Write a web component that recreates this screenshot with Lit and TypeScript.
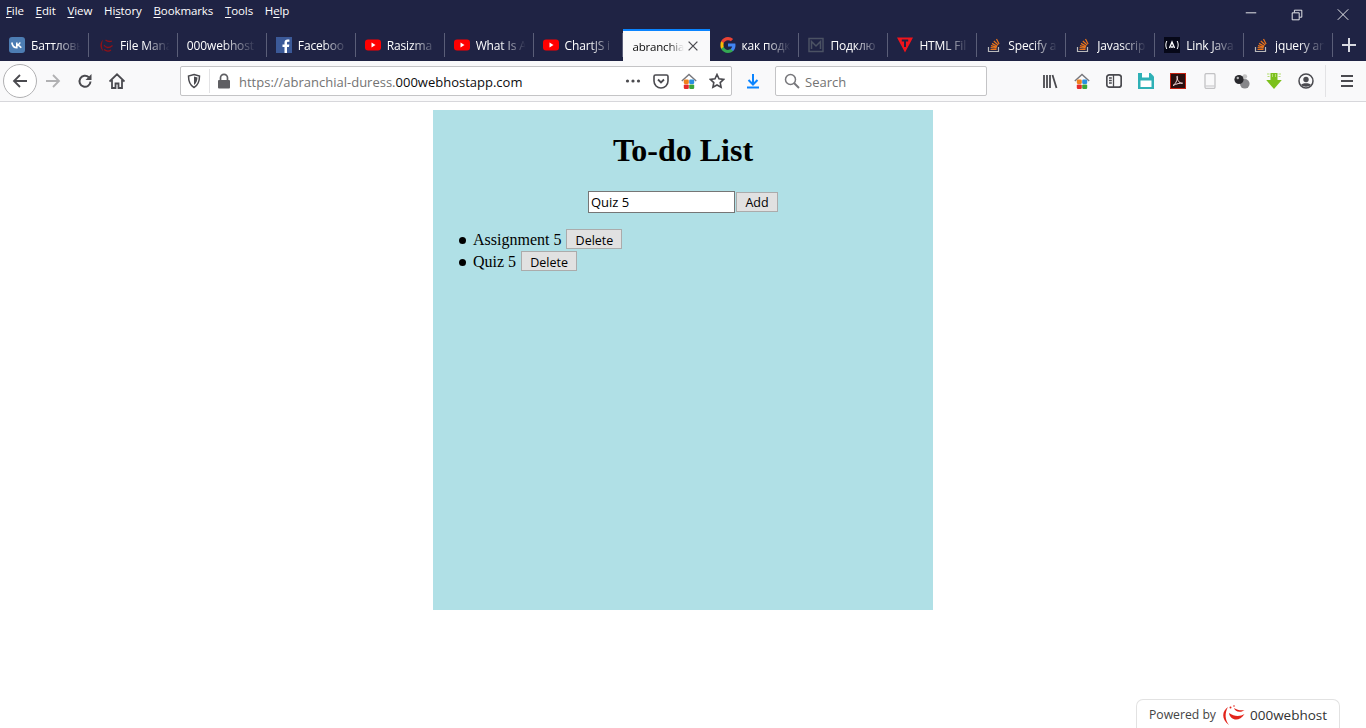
import { LitElement, html, css, svg } from 'lit';
import { customElement, state } from 'lit/decorators.js';

const ytIcon = svg`<rect x="0" y="2.5" width="16" height="11" rx="3" fill="#f00"/><path d="M6.5 5.5v5l4-2.5z" fill="#fff"/>`;
const soIcon = svg`<path d="M2.5 10v4.5h10V10" fill="none" stroke="#b9b9bb" stroke-width="1.2"/><path d="M4.5 12.5h6M4.6 10.6l6 .6M5 8.6l5.800 1.600M6 6.400l5.300 2.800M7.800 4l4.400 4M10.500 2l2.600 5" fill="none" stroke="#e8731c" stroke-width="1.2"/>`;
const homeColor = svg`<path d="M.8 8L8 1.500 15.200 8" fill="none" stroke="#77777c" stroke-width="1.400"/><rect x="2.800" y="6.500" width="5" height="4.500" rx="1.200" fill="#f0801c"/><rect x="8.200" y="6.500" width="5" height="4.500" rx="1.200" fill="#2a8fe0"/><rect x="2.800" y="11.400" width="5" height="4.600" rx="1.200" fill="#e52b2b"/><rect x="8.200" y="11.400" width="5" height="4.600" rx="1.200" fill="#3aa53a"/>`;

const favicons: Record<string, unknown> = {
  vk: svg`<rect width="16" height="16" rx="3" fill="#4d7db3"/><path d="M2.800 5.500c.6 3.400 2.200 5.200 5 5.200V5.500M8 8c1.600-.2 2.600-1.200 3.200-2.500M8.200 8c1.800.2 3 1.200 4 2.700" fill="none" stroke="#fff" stroke-width="1.600"/>`,
  swirl: svg`<path d="M5 2.500C1.500 6 1.500 11 5.500 14.500 3.500 10.500 3.500 7 5 2.500z" fill="#8e1118"/><path d="M6 8c1.500 3 5 3.500 8.500.5M7.500 3c2 1.500 4 2 6.500 1M6 12.500c2.500 2 5 2 7 .5" fill="none" stroke="#8e1118" stroke-width="1.300"/>`,
  fb: svg`<rect width="16" height="16" fill="#3b5998"/><path d="M11 16v-6h2l.3-2.500H11V6c0-.8.300-1.200 1.200-1.200h1.200V2.600C13 2.500 12.300 2.400 11.500 2.400 9.700 2.400 8.500 3.500 8.500 5.600v1.900h-2V10h2v6z" fill="#fff"/>`,
  yt: ytIcon,
  google: svg`<path d="M15.500 8.200c0-.6-.1-1.100-.2-1.600H8v3h4.200c-.2 1-.7 1.800-1.600 2.400v2h2.500c1.500-1.400 2.400-3.400 2.400-5.800z" fill="#4285f4"/><path d="M8 16c2.100 0 3.900-.7 5.100-1.900l-2.500-2c-.7.500-1.600.8-2.600.8-2 0-3.700-1.400-4.300-3.200H1.100v2C2.400 14.300 5 16 8 16z" fill="#34a853"/><path d="M3.700 9.700C3.400 8.800 3.400 7.200 3.700 6.300v-2H1.100C.2 6 .2 10 1.100 11.700z" fill="#fbbc05"/><path d="M8 3.200c1.100 0 2.100.4 2.900 1.100l2.200-2.200C11.800.8 10 0 8 0 5 0 2.400 1.700 1.100 4.300l2.600 2C4.300 4.500 6 3.200 8 3.200z" fill="#ea4335"/>`,
  mail: svg`<rect x="1" y="1.500" width="14" height="13" fill="none" stroke="#4b5263" stroke-width="1.500"/><path d="M3.500 12V4.500L8 9l4.500-4.500V12" fill="none" stroke="#4b5263" stroke-width="1.500"/>`,
  tri: svg`<path d="M0 .5h16L8 15.500z" fill="#f0141c"/><path d="M4.800 3.500h6.400M8 3.500v6.500" stroke="#1f2344" stroke-width="2"/>`,
  so: soIcon,
  link: svg`<rect width="16" height="16" fill="#060818"/><path d="M5.500 11L8 5l2.500 6M7 10h2" fill="none" stroke="#fff" stroke-width="1.400"/><path d="M2.800 4C1.500 6.500 1.500 9.500 2.800 12M13.200 4c1.300 2.500 1.300 5.500 0 8" fill="none" stroke="#fff" stroke-width="1"/>`,
};

const tabs = [
  { title: 'Баттловь', icon: 'vk' },
  { title: 'File Mana', icon: 'swirl' },
  { title: '000webhost F', icon: '' },
  { title: 'Faceboo', icon: 'fb' },
  { title: 'Rasizma', icon: 'yt' },
  { title: 'What Is A', icon: 'yt' },
  { title: 'ChartJS i', icon: 'yt' },
  { title: 'abranchia', icon: '', active: true },
  { title: 'как подк', icon: 'google' },
  { title: 'Подклю', icon: 'mail' },
  { title: 'HTML Fil', icon: 'tri' },
  { title: 'Specify a', icon: 'so' },
  { title: 'Javascrip', icon: 'so' },
  { title: 'Link Java', icon: 'link' },
  { title: 'jquery an', icon: 'so' },
];

const menus = [
  ['', 'F', 'ile'],
  ['', 'E', 'dit'],
  ['', 'V', 'iew'],
  ['Hi', 's', 'tory'],
  ['', 'B', 'ookmarks'],
  ['', 'T', 'ools'],
  ['H', 'e', 'lp'],
];

const extensionIcons = [
  svg`<path d="M2 2v13M5 2v13M8 2v13M10.500 2l4 13" fill="none" stroke="#4a4a4f" stroke-width="1.800"/>`,
  homeColor,
  svg`<rect x=".8" y="1.800" width="14.400" height="12.400" rx="2.500" fill="none" stroke="#4a4a4f" stroke-width="1.700"/><path d="M7.500 2v12M3 5h2.800M3 7.500h2.800M3 10h2.800" fill="none" stroke="#4a4a4f" stroke-width="1.300"/>`,
  svg`<path d="M0 0h12.500L16 3.500V16H0z" fill="#2fb1b6"/><rect x="2.500" y="7.500" width="11" height="6.500" fill="#fff"/><rect x="4" y="0" width="7" height="4.500" fill="#fff"/>`,
  svg`<rect x=".5" y=".5" width="15" height="15" fill="#2a0f0f" stroke="#c4200f"/><path d="M3 12.500c2-1 3.500-3.500 4.500-7.500.2-1 .1-2-.4-1.900-.6.100-.2 2.400 1 4.500 1 1.800 2.500 2.800 4.500 2.600-2.800-.3-6 .6-9.600 2.300z" fill="none" stroke="#f0d8d8" stroke-width="1"/>`,
  svg`<rect x="3" y=".5" width="10" height="15" rx="1.500" fill="none" stroke="#c3c3c5" stroke-width="1.300"/><path d="M3.500 13h9" stroke="#c3c3c5"/>`,
  svg`<circle cx="10.800" cy="3.600" r="2.400" fill="#c4c4c4"/><circle cx="10.800" cy="10.800" r="4.800" fill="#87878a"/><circle cx="5" cy="6.500" r="4.600" fill="#29292d"/><circle cx="3.800" cy="5" r="1.200" fill="#b5b5b5"/>`,
  svg`<path d="M4.500 0h7v7h4.300L8 16 .2 7h4.300z" fill="#7cc01c"/><path d="M1 1h2.500M12.500 1H15M1.500 3.500h2M12.500 3.500h2M6.500 1v3M9.500 1v3" stroke="#b4dd70"/>`,
  svg`<circle cx="8" cy="8" r="7" fill="none" stroke="#4a4a4f" stroke-width="1.500"/><circle cx="8" cy="6.500" r="2.700" fill="#4a4a4f"/><path d="M3 12c1-2.500 9-2.500 10 0-2.500 2.300-7.500 2.300-10 0z" fill="#4a4a4f"/>`,
];

@customElement('app-root')
export class AppRoot extends LitElement {
  static styles = css`
    :host {
      display: flex;
      flex-direction: column;
      position: relative;
      width: 1366px;
      height: 728px;
      overflow: hidden;
      background: #fff;
      font-family: 'Open Sans', 'Noto Sans', sans-serif;
    }
    svg {
      display: block;
      flex: none;
    }
    .menubar {
      display: flex;
      align-items: center;
      height: 29px;
      padding: 0 0 8px 0;
      box-sizing: border-box;
      background: #1f2344;
      color: #fff;
      font-size: 11.500px;
      letter-spacing: -0.1px;
    }
    .menu-item {
      padding: 0 5.800px 0 6px;
    }
    .menu-item u {
      text-underline-offset: 2px;
    }
    .window-controls {
      display: flex;
      margin-left: auto;
      padding-top: 8px;
    }
    .window-btn {
      display: flex;
      justify-content: center;
      width: 46px;
    }
    .tabstrip {
      display: flex;
      height: 32px;
      background: #1f2344;
    }
    .tab {
      display: flex;
      align-items: center;
      gap: 6px;
      position: relative;
      width: 89px;
      box-sizing: border-box;
      padding: 0 4px 0 9px;
      color: #fff;
      font-size: 12px;
      letter-spacing: -0.15px;
    }
    .tab::after {
      content: '';
      position: absolute;
      right: 0;
      top: 4px;
      bottom: 4px;
      width: 1px;
      background: #5a5e78;
    }
    .tab .label {
      flex: 1;
      min-width: 0;
      overflow: hidden;
      white-space: nowrap;
      -webkit-mask-image: linear-gradient(to right, #000 45%, transparent 92%);
      mask-image: linear-gradient(to right, #000 45%, transparent 92%);
    }
    .tab.active {
      width: 87px;
      margin-right: 1px;
      padding: 0 10px 0 10px;
      gap: 2px;
      background: #f9f9fa;
      border-top: 2px solid #0a84ff;
      color: #0c0c0d;
      font-size: 11.500px;
      letter-spacing: -0.2px;
    }
    .tab.active .label {
      -webkit-mask-image: linear-gradient(to right, #000 70%, transparent 100%);
      mask-image: linear-gradient(to right, #000 70%, transparent 100%);
    }
    .tab.active::after {
      display: none;
    }
    .new-tab {
      display: flex;
      align-items: center;
      justify-content: center;
      width: 33px;
    }
    .toolbar {
      display: flex;
      align-items: center;
      height: 41px;
      box-sizing: border-box;
      padding-left: 3px;
      background: #f9f9fa;
      border-bottom: 1px solid #d7d7db;
    }
    .tool {
      display: flex;
      align-items: center;
      justify-content: center;
      flex: none;
      width: 32px;
      height: 32px;
    }
    .back {
      border: 1px solid #b1b1b3;
      border-radius: 50%;
      background: #fff;
    }
    .urlbar,
    .searchbar {
      display: flex;
      align-items: center;
      box-sizing: border-box;
      height: 30px;
      background: #fff;
      border: 1px solid #c4c4c6;
      border-radius: 2px;
      font-size: 13px;
    }
    .urlbar {
      width: 552px;
      margin-left: 47px;
      padding-left: 5px;
    }
    .url-sep {
      width: 1px;
      height: 24px;
      margin: 0 6px 0 7px;
      background: #e3e3e5;
    }
    .url {
      flex: 1;
      margin-left: 7px;
      padding-top: 2px;
      white-space: nowrap;
      color: #737373;
    }
    .url b {
      font-weight: 400;
      color: #0c0c0d;
    }
    .url-actions {
      display: flex;
      gap: 12px;
      padding-right: 6px;
    }
    .download {
      margin-left: 5px;
    }
    .searchbar {
      gap: 5px;
      width: 212px;
      margin-left: 6px;
      padding-left: 8px;
      color: #737373;
    }
    .searchbar span {
      padding-top: 2px;
    }
    .extensions {
      display: flex;
      margin-left: 47px;
    }
    .toolbar-sep {
      width: 1px;
      height: 32px;
      margin: 0 5px 0 3px;
      background: #e3e3e5;
    }
    main {
      flex: 1;
      padding-top: 8px;
      font-family: 'Liberation Serif', serif;
      font-size: 16px;
      color: #000;
    }
    .card {
      display: flow-root;
      width: 500px;
      height: 500px;
      margin: 0 auto;
      background: #b0e0e6;
    }
    h1 {
      margin: 22px 0 21px;
      font-size: 32px;
      text-align: center;
    }
    form {
      display: flex;
      justify-content: center;
      align-items: center;
      gap: 1px;
      height: 24px;
    }
    input {
      box-sizing: border-box;
      width: 147px;
      height: 22px;
      margin: 0;
      padding: 0 2px;
      border: 1px solid #767676;
      background: #fff;
      color: #000;
      font: 13px 'Open Sans', sans-serif;
      outline: none;
    }
    button {
      box-sizing: border-box;
      height: 20px;
      margin: 0;
      padding: 0;
      border: 1px solid #ababab;
      border-radius: 0;
      background: #e1e1e1;
      color: #000;
      font: 12.500px 'Open Sans', sans-serif;
    }
    .add {
      width: 42px;
    }
    .delete {
      width: 56px;
      margin-left: 1px;
      padding-top: 2px;
    }
    ul {
      margin: 15px 0;
      padding-left: 40px;
      list-style: none;
    }
    li {
      height: 22px;
      line-height: 20px;
    }
    li::before {
      content: '';
      display: inline-block;
      width: 7px;
      height: 7px;
      margin: 0 7px 1px -14px;
      border-radius: 50%;
      background: #000;
    }
    .powered {
      display: flex;
      align-items: center;
      position: absolute;
      right: 26px;
      bottom: 0;
      box-sizing: border-box;
      width: 204px;
      height: 29px;
      padding: 1px 0 0 12px;
      background: #fff;
      border: 1px solid #e2e2e2;
      border-bottom: none;
      border-radius: 7px 7px 0 0;
      font-size: 12.200px;
      color: #444;
    }
    .powered svg {
      margin: 0 5px 0 5px;
    }
    .powered strong {
      font-weight: 500;
      font-size: 13.500px;
      color: #333;
    }
  `;

  @state() private task = 'Quiz 5';
  @state() private items = ['Assignment 5', 'Quiz 5'];

  private icon(content: unknown, size = 16) {
    return html`<svg width=${size} height=${size} viewBox="0 0 16 16">${content}</svg>`;
  }

  private renderTab(tab: (typeof tabs)[number]) {
    return html`
      <div class="tab ${tab.active ? 'active' : ''}">
        ${tab.icon ? this.icon(favicons[tab.icon]) : ''}
        <span class="label">${tab.title}</span>
        ${tab.active
          ? this.icon(svg`<path d="M3 3l10 10M13 3L3 13" stroke="#4a4a4f" stroke-width="1.500"/>`, 14)
          : ''}
      </div>
    `;
  }

  private addTask(e: Event) {
    e.preventDefault();
    this.items = [...this.items, this.task];
  }

  render() {
    return html`
      <div class="menubar">
        ${menus.map(
          ([a, b, c]) => html`<span class="menu-item">${a}<u>${b}</u>${c}</span>`,
        )}
        <div class="window-controls">
          <span class="window-btn">${this.icon(svg`<path d="M2 5.500h12" stroke="#fff"/>`, 14)}</span>
          <span class="window-btn">${this.icon(svg`<path d="M2.500 5.500h8v8h-8zM5 5V2.500h8.500v8H11" fill="none" stroke="#fff"/>`, 14)}</span>
          <span class="window-btn">${this.icon(svg`<path d="M2 1.500l12 12M14 1.500l-12 12" stroke="#fff"/>`, 14)}</span>
        </div>
      </div>
      <div class="tabstrip">
        ${tabs.map((t) => this.renderTab(t))}
        <div class="new-tab">
          ${this.icon(svg`<path d="M8 1v14M1 8h14" stroke="#d8d9e0" stroke-width="2"/>`)}
        </div>
      </div>
      <div class="toolbar">
        <div class="tool back">
          ${this.icon(svg`<path d="M8 2L2 8l6 6M2 8h13" fill="none" stroke="#4a4a4f" stroke-width="1.800"/>`)}
        </div>
        <div class="tool">
          ${this.icon(svg`<path d="M8 2l6 6-6 6M14 8H1" fill="none" stroke="#b1b1b3" stroke-width="1.800"/>`)}
        </div>
        <div class="tool">
          ${this.icon(svg`<path d="M13.500 8.500a5.500 5.500 0 1 1-1.700-4.200" fill="none" stroke="#4a4a4f" stroke-width="2"/><path d="M14.500 1v6h-6z" fill="#4a4a4f"/>`)}
        </div>
        <div class="tool">
          ${this.icon(svg`<path d="M.5 8.500L8 1.300l7.500 7.200M3 7v8h3.500v-4.500h3V15H13V7" fill="none" stroke="#4a4a4f" stroke-width="1.800"/>`)}
        </div>
        <div class="urlbar">
          ${this.icon(svg`<path d="M8 1.500l5.500 1.500c0 5-1 9-5.500 11.500C3.500 12 2.500 8 2.500 3z" fill="none" stroke="#4a4a4f" stroke-width="1.500"/><path d="M8 3.500v8.500c2.500-1.800 3.300-4.500 3.500-7.500z" fill="#4a4a4f"/>`)}
          <span class="url-sep"></span>
          ${this.icon(svg`<path d="M4.500 7V4.800a3.500 3.500 0 0 1 7 0V7" fill="none" stroke="#5f5f63" stroke-width="1.700"/><rect x="2" y="7" width="12" height="8.500" rx="1" fill="#5f5f63"/>`)}
          <span class="url">https://abranchial-duress.<b>000webhostapp.com</b></span>
          <div class="url-actions">
            ${this.icon(svg`<circle cx="2.500" cy="8" r="1.600" fill="#4a4a4f"/><circle cx="8" cy="8" r="1.600" fill="#4a4a4f"/><circle cx="13.500" cy="8" r="1.600" fill="#4a4a4f"/>`)}
            ${this.icon(svg`<path d="M2.500 2h11A1.500 1.500 0 0 1 15 3.500V8a7 7 0 0 1-14 0V3.500A1.500 1.500 0 0 1 2.500 2z" fill="none" stroke="#4a4a4f" stroke-width="1.600"/><path d="M5 6.500l3 3 3-3" fill="none" stroke="#4a4a4f" stroke-width="1.800"/>`)}
            ${this.icon(homeColor)}
            ${this.icon(svg`<path d="M8 1.500l2 4.300 4.700.6-3.500 3.200.9 4.700L8 12l-4.100 2.300.9-4.700L1.300 6.400 6 5.800z" fill="none" stroke="#4a4a4f" stroke-width="1.600"/>`)}
          </div>
        </div>
        <div class="tool download">
          ${this.icon(svg`<path d="M8 1v10M3.500 7L8 11.500 12.500 7" fill="none" stroke="#0a84ff" stroke-width="2"/><path d="M2 14.500h12" stroke="#0a84ff" stroke-width="2"/>`)}
        </div>
        <div class="searchbar">
          ${this.icon(svg`<circle cx="6.500" cy="6.500" r="5" fill="none" stroke="#77777b" stroke-width="1.500"/><path d="M10 10l5 5" stroke="#77777b" stroke-width="2"/>`)}
          <span>Search</span>
        </div>
        <div class="extensions">
          ${extensionIcons.map((i) => html`<div class="tool">${this.icon(i)}</div>`)}
        </div>
        <span class="toolbar-sep"></span>
        <div class="tool">
          ${this.icon(svg`<path d="M2 3h12M2 8h12M2 13h12" stroke="#4a4a4f" stroke-width="2"/>`)}
        </div>
      </div>
      <main>
        <div class="card">
          <h1>To-do List</h1>
          <form @submit=${this.addTask}>
            <input
              .value=${this.task}
              @input=${(e: Event) => (this.task = (e.target as HTMLInputElement).value)}
            />
            <button class="add" type="submit">Add</button>
          </form>
          <ul>
            ${this.items.map(
              (item, i) => html`<li>${item} <button
                  class="delete"
                  @click=${() => (this.items = this.items.filter((_, j) => j !== i))}
                >Delete</button></li>`,
            )}
          </ul>
        </div>
      </main>
      <div class="powered">
        <span>Powered by</span>
        <svg width="24" height="20" viewBox="0 0 24 20">
          <path d="M7 2C1 6 0 14 8 20 4 15 3.500 8 7 2z" fill="#e2231a"/>
          <path d="M8 8c1 7 10 10 15.500 1-4 2.500-10 3-15.500-1zM13 3c1 3.500 6 5.500 10.500 2-3 .5-7 .5-10.500-2z" fill="#e2231a"/>
          <circle cx="9.500" cy="2.500" r="1" fill="#e2231a"/>
          <circle cx="13" cy="1" r=".8" fill="#e2231a"/>
        </svg>
        <strong>000webhost</strong>
      </div>
    `;
  }
}
